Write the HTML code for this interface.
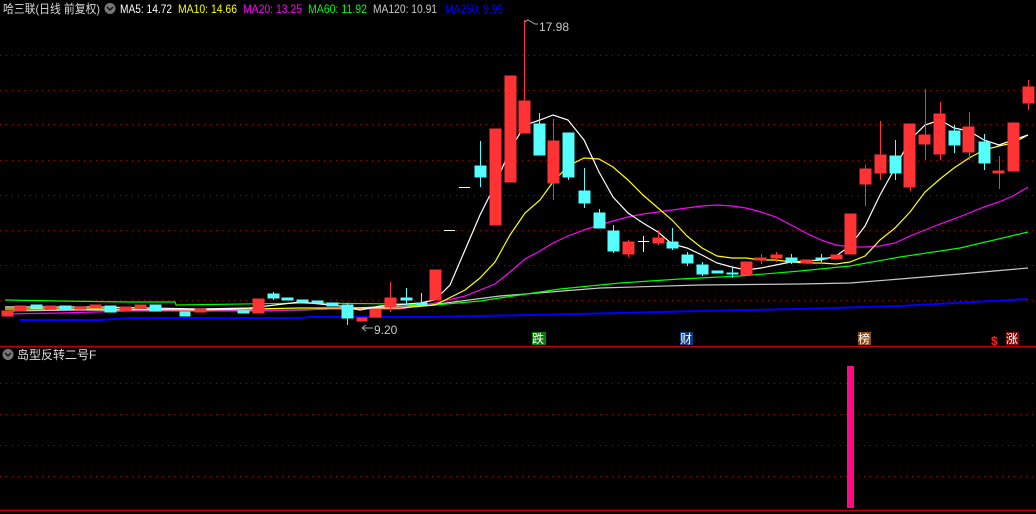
<!DOCTYPE html>
<html><head><meta charset="utf-8"><style>
html,body{margin:0;padding:0;background:#000;width:1036px;height:514px;overflow:hidden}
svg{display:block}
text{font-family:"Liberation Sans","Noto Sans CJK SC",sans-serif}
</style></head><body>
<svg width="1036" height="514" viewBox="0 0 1036 514" xmlns="http://www.w3.org/2000/svg">
<g stroke="#8a1010" stroke-width="1" stroke-dasharray="1,5">
<line x1="0" y1="55.5" x2="1036" y2="55.5"/><line x1="0" y1="90.5" x2="1036" y2="90.5"/>
<line x1="0" y1="124.5" x2="1036" y2="124.5"/><line x1="0" y1="160.5" x2="1036" y2="160.5"/>
<line x1="0" y1="195.5" x2="1036" y2="195.5"/><line x1="0" y1="230.5" x2="1036" y2="230.5"/>
<line x1="0" y1="265.5" x2="1036" y2="265.5"/><line x1="0" y1="300.5" x2="1036" y2="300.5"/>
<line x1="0" y1="383.5" x2="1036" y2="383.5"/><line x1="0" y1="414.5" x2="1036" y2="414.5"/>
<line x1="0" y1="445.5" x2="1036" y2="445.5"/><line x1="0" y1="476.5" x2="1036" y2="476.5"/>
</g>
<line x1="0" y1="346.5" x2="1036" y2="346.5" stroke="#c00000" stroke-width="1.5"/>
<line x1="0" y1="510.5" x2="1036" y2="510.5" stroke="#c00000" stroke-width="1.5"/>

<g fill="none" stroke-width="1.2">
<polyline stroke="#0000ff" stroke-width="2" points="20,320 100,320 130,318 300,318 310,317 430,317 530,315 620,313 700,311 800,309 900,306 1028,299"/>
<polyline stroke="#c8c8c8" points="5,311 80,310 200,311 300,310 430,305 500,296 600,288 700,285 800,284 850,283 900,279 960,274 1028,268"/>
<polyline stroke="#00ff00" points="5,300 60,301 130,302 175,302 176,305 310,303 400,304 435,305 480,301 520,295 560,289 620,283 680,279 740,276 800,271 850,266 900,257 960,248 1028,232"/>
<polyline stroke="#ff00ff" points="5,314 60,313 130,311 250,311 330,309 400,309 435,303 465,296 495,284 510,272 525,259 540,251 553,243 568,236 584,230 599,225 613,221 628,217 643,214 658,212 672,210 687,208 702,206 717,205 732,206 746,208 761,212 776,217 791,225 806,233 821,240 836,245 850,247 865,247 880,246 895,243 910,236 925,230 940,224 954,219 969,213 984,207 999,202 1013,196 1028,187"/>
<polyline stroke="#ffff00" points="5,309 100,309 200,310 300,308 400,308 435,305 465,290 480,278 495,262 510,235 525,213 540,200 553,182 568,166 584,158 599,159 613,167 628,180 643,195 658,208 672,220 687,236 702,248 717,256 732,258 746,258 761,260 776,260 791,262 806,263 821,263 836,264 850,262 865,256 880,240 895,228 910,212 925,192 940,179 954,168 969,158 984,150 999,146 1013,143 1028,135"/>
<polyline stroke="#ffffff" points="5,307 100,307 200,309 250,308 300,302 340,306 360,310 380,306 420,303 435,300 450,285 465,250 480,215 495,185 510,150 525,125 540,120 553,115 568,120 584,140 599,172 613,197 628,213 643,223 658,232 672,244 687,248 702,255 717,263 732,267 746,270 761,268 776,265 791,262 806,261 821,260 836,256 850,246 865,226 880,195 895,168 910,140 925,125 940,120 954,128 969,131 984,140 999,145 1013,140 1028,135"/>
</g>

<g stroke-width="1">
<g fill="#ff3333" stroke="#ff3333">
<rect x="2" y="311" width="11" height="5"/><rect x="15" y="306" width="11" height="5"/>
<rect x="45" y="306" width="11" height="3"/><rect x="75" y="307" width="11" height="2"/>
<rect x="90" y="305" width="11" height="3"/><rect x="120" y="307" width="11" height="4"/>
<rect x="135" y="305" width="11" height="3"/><rect x="195" y="309" width="11" height="3"/>
<rect x="253" y="299" width="11" height="14"/><rect x="357" y="318" width="10" height="3"/>
<rect x="370" y="310" width="11" height="7"/><line x1="390.5" y1="282" x2="390.5" y2="312"/>
<rect x="385" y="298" width="11" height="9"/><rect x="430" y="270" width="11" height="30"/>
<rect x="490" y="129" width="11" height="96"/><rect x="505" y="76" width="11" height="106"/>
<line x1="524.5" y1="20" x2="524.5" y2="133"/><rect x="519" y="101" width="11" height="32"/>
<line x1="553.5" y1="119" x2="553.5" y2="200"/><rect x="548" y="141" width="11" height="42"/>
<line x1="628.5" y1="240" x2="628.5" y2="257"/><rect x="623" y="242" width="11" height="12"/>
<line x1="658.5" y1="230" x2="658.5" y2="245"/><rect x="653" y="238" width="11" height="5"/>
<rect x="741" y="262" width="11" height="13"/>
<line x1="761.5" y1="254" x2="761.5" y2="264"/><rect x="755" y="258" width="11" height="2"/>
<line x1="776.5" y1="252" x2="776.5" y2="262"/><rect x="771" y="255" width="11" height="3"/>
<rect x="801" y="260" width="11" height="3"/><rect x="831" y="255" width="11" height="4"/>
<rect x="845" y="214" width="11" height="40"/>
<line x1="865.5" y1="165" x2="865.5" y2="206"/><rect x="860" y="169" width="11" height="15"/>
<line x1="880.5" y1="121" x2="880.5" y2="180"/><rect x="875" y="155" width="11" height="18"/>
<line x1="910.5" y1="124" x2="910.5" y2="191"/><rect x="904" y="124" width="11" height="63"/>
<line x1="925.5" y1="89" x2="925.5" y2="160"/><rect x="919" y="135" width="11" height="9"/>
<line x1="940.5" y1="102" x2="940.5" y2="160"/><rect x="934" y="114" width="11" height="40"/>
<line x1="969.5" y1="112" x2="969.5" y2="160"/><rect x="963" y="127" width="11" height="25"/>
<line x1="999.5" y1="156" x2="999.5" y2="189"/><rect x="993" y="171" width="11" height="2"/>
<rect x="1008" y="123" width="11" height="48"/>
<line x1="1028.5" y1="80" x2="1028.5" y2="110"/><rect x="1023" y="87" width="11" height="16"/>
</g>
<g fill="#55ffff" stroke="#55ffff">
<rect x="31" y="305" width="11" height="3"/><rect x="60" y="306" width="11" height="3"/>
<rect x="105" y="306" width="11" height="6"/><rect x="150" y="305" width="11" height="6"/>
<rect x="180" y="312" width="10" height="4"/><rect x="238" y="311" width="11" height="2"/>
<line x1="273.5" y1="292" x2="273.5" y2="300"/><rect x="268" y="294" width="11" height="4"/>
<rect x="282" y="298" width="11" height="2"/><rect x="297" y="300" width="11" height="2"/>
<rect x="312" y="301" width="11" height="2"/><rect x="327" y="303" width="11" height="3"/>
<line x1="347.5" y1="303" x2="347.5" y2="325"/><rect x="342" y="305" width="11" height="13"/>
<line x1="406.5" y1="288" x2="406.5" y2="305"/><rect x="401" y="298" width="11" height="2"/>
<line x1="421.5" y1="293" x2="421.5" y2="306"/><rect x="416" y="303" width="11" height="2"/>
<line x1="480.5" y1="141" x2="480.5" y2="187"/><rect x="475" y="166" width="11" height="11"/>
<line x1="539.5" y1="113" x2="539.5" y2="155"/><rect x="534" y="124" width="11" height="31"/>
<line x1="568.5" y1="133" x2="568.5" y2="180"/><rect x="563" y="133" width="11" height="44"/>
<line x1="584.5" y1="168" x2="584.5" y2="208"/><rect x="579" y="191" width="11" height="12"/>
<line x1="599.5" y1="209" x2="599.5" y2="228"/><rect x="594" y="213" width="11" height="15"/>
<line x1="613.5" y1="225" x2="613.5" y2="253"/><rect x="608" y="231" width="11" height="20"/>
<line x1="672.5" y1="228" x2="672.5" y2="250"/><rect x="667" y="242" width="11" height="6"/>
<line x1="687.5" y1="252" x2="687.5" y2="266"/><rect x="682" y="255" width="11" height="8"/>
<line x1="702.5" y1="262" x2="702.5" y2="276"/><rect x="697" y="265" width="11" height="9"/>
<rect x="712" y="271" width="11" height="2"/>
<line x1="732.5" y1="268" x2="732.5" y2="278"/><rect x="727" y="273" width="11" height="1"/>
<line x1="791.5" y1="254" x2="791.5" y2="264"/><rect x="786" y="258" width="11" height="4"/>
<line x1="821.5" y1="254" x2="821.5" y2="262"/><rect x="816" y="258" width="11" height="1"/>
<line x1="895.5" y1="140" x2="895.5" y2="180"/><rect x="890" y="156" width="11" height="17"/>
<line x1="954.5" y1="125" x2="954.5" y2="153"/><rect x="949" y="131" width="11" height="14"/>
<line x1="984.5" y1="134" x2="984.5" y2="170"/><rect x="979" y="142" width="11" height="21"/>
</g>
<g stroke="#ffffff"><line x1="459" y1="187.5" x2="470" y2="187.5"/><line x1="444" y1="230.5" x2="455" y2="230.5"/>
<line x1="638" y1="241.5" x2="649" y2="241.5"/><line x1="643.5" y1="236" x2="643.5" y2="252"/></g>
</g>

<path d="M525 22 L528 20 L535 24 L538 24" stroke="#aaa" fill="none"/>
<text x="539" y="31" fill="#c8c8c8" font-size="12">17.98</text>
<path d="M373 328 L362 328 M362 328 L366 325 M362 328 L366 331" stroke="#aaa" fill="none"/>
<text x="374" y="334" fill="#c8c8c8" font-size="12">9.20</text>

<text x="3" y="13" fill="#dcdcdc" font-size="12" textLength="97" lengthAdjust="spacingAndGlyphs">哈三联(日线 前复权)</text>
<circle cx="110" cy="8.5" r="5.5" fill="#777"/>
<path d="M107 7 L110 10 L113 7" stroke="#111" stroke-width="1.5" fill="none"/>
<g font-size="12">
<text x="120" y="13" fill="#fff" textLength="52" lengthAdjust="spacingAndGlyphs">MA5: 14.72</text>
<text x="178" y="13" fill="#ffff00" textLength="59" lengthAdjust="spacingAndGlyphs">MA10: 14.66</text>
<text x="243" y="13" fill="#ff00ff" textLength="59" lengthAdjust="spacingAndGlyphs">MA20: 13.25</text>
<text x="308" y="13" fill="#00ff00" textLength="59" lengthAdjust="spacingAndGlyphs">MA60: 11.92</text>
<text x="373" y="13" fill="#c8c8c8" textLength="64" lengthAdjust="spacingAndGlyphs">MA120: 10.91</text>
<text x="445" y="13" fill="#0000ff" textLength="58" lengthAdjust="spacingAndGlyphs">MA250: 9.99</text>
</g>

<rect x="532" y="332" width="14" height="13" fill="#0a7a0a"/>
<text x="532" y="343" fill="#fff" font-size="12">跌</text>
<rect x="680" y="332" width="13" height="13" fill="#0a3a7a"/>
<text x="680" y="343" fill="#fff" font-size="12">财</text>
<rect x="858" y="332" width="13" height="13" fill="#8a4a10"/>
<text x="858" y="343" fill="#fff" font-size="12">榜</text>
<text x="991" y="345" fill="#ff2020" font-size="12" font-weight="bold">$</text>
<rect x="1006" y="332" width="13" height="13" fill="#7a0a0a"/>
<text x="1006" y="343" fill="#fff" font-size="12">涨</text>

<circle cx="8" cy="354.5" r="5.5" fill="#777"/>
<path d="M5 353 L8 356 L11 353" stroke="#111" stroke-width="1.5" fill="none"/>
<text x="17" y="359" fill="#dcdcdc" font-size="12">岛型反转二号F</text>
<rect x="847" y="366" width="7" height="142" fill="#ff0a82"/>
</svg>
</body></html>
